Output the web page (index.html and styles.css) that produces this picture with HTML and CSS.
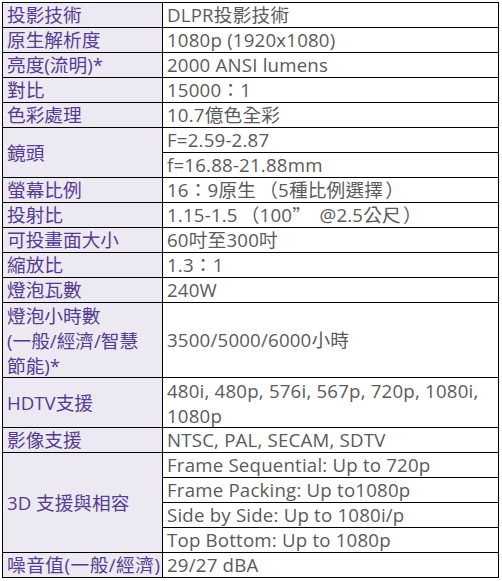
FILE: index.html
```html
<!DOCTYPE html>
<html lang="zh-Hant">
<head>
<meta charset="utf-8">
<title>規格</title>
<link rel="stylesheet" href="styles.css">
</head>
<body>
<div class="spec">
  <div class="k">投影技術</div><div class="v">DLPR投影技術</div>
  <div class="k">原生解析度</div><div class="v">1080p (1920x1080)</div>
  <div class="k">亮度(流明)*</div><div class="v">2000 ANSI lumens</div>
  <div class="k">對比</div><div class="v">15000：1</div>
  <div class="k">色彩處理</div><div class="v">10.7億色全彩</div>
  <div class="k span2">鏡頭</div><div class="v">F=2.59-2.87</div>
  <div class="v">f=16.88-21.88mm</div>
  <div class="k">螢幕比例</div><div class="v">16：9原生<span class="op">（</span>5種比例選擇<span class="cp">）</span></div>
  <div class="k">投射比</div><div class="v">1.15-1.5<span class="op">（</span>100<span class="cjk">”</span>@2.5公尺<span class="cp">）</span></div>
  <div class="k">可投畫面大小</div><div class="v">60吋至300吋</div>
  <div class="k">縮放比</div><div class="v">1.3：1</div>
  <div class="k">燈泡瓦數</div><div class="v">240W</div>
  <div class="k span3 multi">燈泡小時數<br>(一般/經濟/智慧<br>節能)*</div><div class="v span3">3500/5000/6000小時</div>
  <div class="k span2">HDTV支援</div><div class="v span2 multi"><p class="wrap">480i, 480p, 576i, 567p, 720p, 1080i, 1080p</p></div>
  <div class="k">影像支援</div><div class="v">NTSC, PAL, SECAM, SDTV</div>
  <div class="k span4">3D 支援與相容</div><div class="v">Frame Sequential: Up to 720p</div>
  <div class="v">Frame Packing: Up to1080p</div>
  <div class="v">Side by Side: Up to 1080i/p</div>
  <div class="v">Top Bottom: Up to 1080p</div>
  <div class="k tight">噪音值(一般/經濟)</div><div class="v">29/27 dBA</div>
</div>
</body>
</html>
```
FILE: styles.css
```css
html, body {
  margin: 0;
  padding: 0;
  background: #ffffff;
}
body {
  padding: 2px;
}
.spec {
  box-sizing: border-box;
  width: 497px;
  display: grid;
  grid-template-columns: 159px 335px;
  grid-auto-rows: 24px;
  gap: 1px;
  padding: 1px;
  background: #000000;
  font-family: "Open Sans", "Noto Sans CJK TC", sans-serif;
  font-size: 18.67px;
  line-height: 24px;
}
.k, .v {
  display: flex;
  align-items: center;
  padding: 0 4px;
  white-space: nowrap;
}
.k {
  grid-column: 1;
  background: #ece9f3;
  color: #553c8d;
}
.v {
  grid-column: 2;
  background: #ffffff;
  color: #5a5a5a;
  letter-spacing: 0.2px;
}
.multi {
  white-space: normal;
  line-height: 25px;
}
.wrap {
  margin: 0;
  white-space: normal;
}
.span2 { grid-row: span 2; }
.span3 { grid-row: span 3; }
.span4 { grid-row: span 4; }
.cjk {
  font-family: "Noto Sans CJK TC", sans-serif;
  margin-right: 0.45em;
}
.op {
  margin-left: 3px;
}
.cp {
  margin-left: 2px;
}
.tight {
  letter-spacing: 0.5px;
  padding-right: 0;
  position: relative;
  z-index: 1;
}
```
